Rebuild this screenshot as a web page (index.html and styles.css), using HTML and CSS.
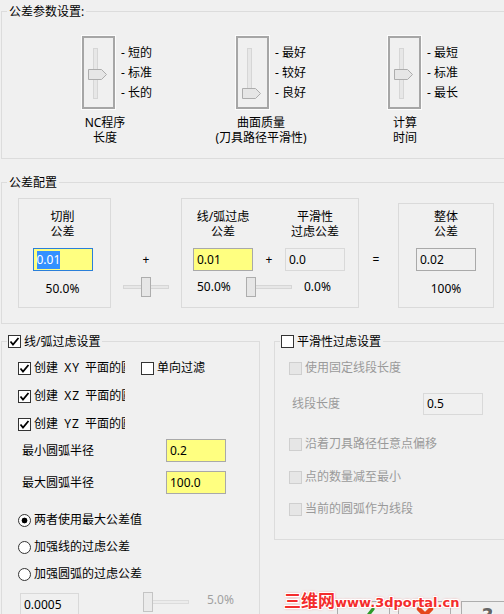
FILE: index.html
```html
<!DOCTYPE html>
<html lang="zh-CN">
<head>
	<meta charset="UTF-8">
	<title>公差设置</title>
	<link rel="stylesheet" href="styles.css">
</head>
<body>
	<!-- 公差参数: 三个竖向滑块 -->
	<fieldset class="group group-params">
		<legend>公差参数设置:</legend>
		<div class="params">
			<div class="unit">
				<div class="unit-top">
					<div class="vslider">
						<svg width="33" height="73" viewBox="0 0 33 73">
							<rect x="11.5" y="12.5" width="4" height="50" fill="#e7e7e7" stroke="#d6d6d6"/>
							<path d="M6.5 33.5h13l5 5-5 5h-13z" fill="#e6e6e6" stroke="#adadad"/>
						</svg>
					</div>
					<ul class="ticks">
						<li>- 短的</li>
						<li>- 标准</li>
						<li>- 长的</li>
					</ul>
				</div>
				<div class="cap cap-a"><span>NC程序</span><span>长度</span></div>
			</div>
			<div class="unit">
				<div class="unit-top">
					<div class="vslider">
						<svg width="33" height="73" viewBox="0 0 33 73">
							<rect x="11.5" y="12.5" width="4" height="50" fill="#e7e7e7" stroke="#d6d6d6"/>
							<path d="M6.5 52.5h13l5 5-5 5h-13z" fill="#e6e6e6" stroke="#adadad"/>
						</svg>
					</div>
					<ul class="ticks">
						<li>- 最好</li>
						<li>- 较好</li>
						<li>- 良好</li>
					</ul>
				</div>
				<div class="cap cap-b"><span>曲面质量</span><span>(刀具路径平滑性)</span></div>
			</div>
			<div class="unit">
				<div class="unit-top">
					<div class="vslider">
						<svg width="33" height="73" viewBox="0 0 33 73">
							<rect x="11.5" y="12.5" width="4" height="50" fill="#e7e7e7" stroke="#d6d6d6"/>
							<path d="M6.5 33.5h13l5 5-5 5h-13z" fill="#e6e6e6" stroke="#adadad"/>
						</svg>
					</div>
					<ul class="ticks">
						<li>- 最短</li>
						<li>- 标准</li>
						<li>- 最长</li>
					</ul>
				</div>
				<div class="cap cap-c"><span>计算</span><span>时间</span></div>
			</div>
		</div>
	</fieldset>

	<!-- 公差配置 -->
	<fieldset class="group group-conf">
		<legend>公差配置</legend>
		<div class="conf">
			<div class="tbox tbox-cut">
				<div class="ttl"><span>切削</span><span>公差</span></div>
				<div class="field field-yellow field-focus"><span class="sel">0.01</span></div>
				<div class="pct">50.0%</div>
			</div>
			<div class="op-col">
				<div class="op">+</div>
				<svg class="hslider" width="46" height="20" viewBox="0 0 46 20">
					<rect x="0.5" y="8.5" width="45" height="3" fill="#e7e7e7" stroke="#d6d6d6"/>
					<rect x="18.5" y="0.5" width="9" height="19" fill="#e6e6e6" stroke="#adadad"/>
				</svg>
			</div>
			<div class="tbox tbox-mid">
				<div class="mid-grid">
					<div class="ttl"><span>线/弧过虑</span><span>公差</span></div>
					<div></div>
					<div class="ttl"><span>平滑性</span><span>过虑公差</span></div>
					<div class="field field-yellow">0.01</div>
					<div class="op">+</div>
					<div class="field field-soft">0.0</div>
				</div>
				<div class="mid-foot">
					<span class="foot-a">50.0%</span>
					<svg class="hslider" width="46" height="20" viewBox="0 0 46 20">
						<rect x="0.5" y="8.5" width="45" height="3" fill="#e7e7e7" stroke="#d6d6d6"/>
						<rect x="0.5" y="0.5" width="9" height="19" fill="#e6e6e6" stroke="#adadad"/>
					</svg>
					<span class="foot-b">0.0%</span>
				</div>
			</div>
			<div class="eq-col">=</div>
			<div class="tbox tbox-sum">
				<div class="ttl"><span>整体</span><span>公差</span></div>
				<div class="field">0.02</div>
				<div class="pct">100%</div>
			</div>
		</div>
	</fieldset>

	<div class="lower">
		<!-- 线/弧过虑设置 -->
		<fieldset class="group group-arc">
			<legend>
				<span class="chk-line">
					<i class="cb"><svg width="11" height="11" viewBox="0 0 11 11"><path d="M1.5 5.5l2.5 3 5.5-6.5" fill="none" stroke="#000" stroke-width="1.8"/></svg></i>
					<span>线/弧过虑设置</span>
				</span>
			</legend>
			<div class="arc">
				<div class="cb-row">
					<i class="cb"><svg width="11" height="11" viewBox="0 0 11 11"><path d="M1.5 5.5l2.5 3 5.5-6.5" fill="none" stroke="#000" stroke-width="1.8"/></svg></i>
					<span class="txt clip">创建 <span class="xy">XY</span> 平面的圆弧</span>
					<i class="cb cb2"></i>
					<span class="txt">单向过滤</span>
				</div>
				<div class="cb-row">
					<i class="cb"><svg width="11" height="11" viewBox="0 0 11 11"><path d="M1.5 5.5l2.5 3 5.5-6.5" fill="none" stroke="#000" stroke-width="1.8"/></svg></i>
					<span class="txt clip">创建 <span class="xy">XZ</span> 平面的圆弧</span>
				</div>
				<div class="cb-row">
					<i class="cb"><svg width="11" height="11" viewBox="0 0 11 11"><path d="M1.5 5.5l2.5 3 5.5-6.5" fill="none" stroke="#000" stroke-width="1.8"/></svg></i>
					<span class="txt clip">创建 <span class="xy">YZ</span> 平面的圆弧</span>
				</div>
				<div class="rad-row rad-min">
					<span class="lbl">最小圆弧半径</span>
					<div class="field field-yellow">0.2</div>
				</div>
				<div class="rad-row rad-max">
					<span class="lbl">最大圆弧半径</span>
					<div class="field field-yellow">100.0</div>
				</div>
				<div class="radio-row radio-first"><i class="rb on"></i><span>两者使用最大公差值</span></div>
				<div class="radio-row"><i class="rb"></i><span>加强线的过虑公差</span></div>
				<div class="radio-row"><i class="rb"></i><span>加强圆弧的过虑公差</span></div>
				<div class="tail">
					<div class="field field-soft field-tail">0.0005</div>
					<svg class="hslider tail-slider" width="46" height="20" viewBox="0 0 46 20">
						<rect x="0.5" y="8.5" width="45" height="3" fill="#ececec" stroke="#dcdcdc"/>
						<rect x="0.5" y="0.5" width="9" height="19" fill="#ebebeb" stroke="#c4c4c4"/>
					</svg>
					<span class="tail-pct">5.0%</span>
				</div>
			</div>
		</fieldset>

		<div class="side">
			<!-- 平滑性过虑设置 -->
			<fieldset class="group group-smooth">
				<legend>
					<span class="chk-line">
						<i class="cb"></i>
						<span>平滑性过虑设置</span>
					</span>
				</legend>
				<div class="smooth">
					<div class="cb-row off">
						<i class="cb cb-off"></i>
						<span class="txt">使用固定线段长度</span>
					</div>
					<div class="len-row">
						<span class="lbl off">线段长度</span>
						<div class="field field-soft">0.5</div>
					</div>
					<div class="cb-row off row-a">
						<i class="cb cb-off"></i>
						<span class="txt">沿着刀具路径任意点偏移</span>
					</div>
					<div class="cb-row off row-b">
						<i class="cb cb-off"></i>
						<span class="txt">点的数量减至最小</span>
					</div>
					<div class="cb-row off row-c">
						<i class="cb cb-off"></i>
						<span class="txt">当前的圆弧作为线段</span>
					</div>
				</div>
			</fieldset>

			<div class="btns">
				<button class="btn">
					<svg width="22" height="22" viewBox="0 0 22 22"><path d="M4 14l5 5L20 5" fill="none" stroke="#2f9a2a" stroke-width="3.2" stroke-linecap="round" stroke-linejoin="round"/></svg>
				</button>
				<button class="btn">
					<svg width="22" height="22" viewBox="0 0 22 22"><path d="M5 5l12 12M17 5L5 17" fill="none" stroke="#e5471c" stroke-width="4.5" stroke-linecap="round"/></svg>
				</button>
				<button class="btn btn-help"><span class="help">?</span></button>
			</div>
		</div>
	</div>

	<div class="mark"><span class="mark-cn">三维网</span>www.3dportal.cn</div>
</body>
</html>
```

FILE: styles.css
```css
*{
	margin: 0;
	padding: 0;
	box-sizing: border-box;
}
body{
	width: 504px;
	height: 614px;
	overflow: hidden;
	position: relative;
	background: #f0f0f0;
	color: #000;
	font: 12px/16px "Noto Sans", "Noto Sans CJK SC", sans-serif;
}
ul{
	list-style: none;
}
i{
	font-style: normal;
}

/* 分组框 */
.group{
	border: 1px solid #dcdcdc;
	padding: 0;
	min-width: 0;
}
.group legend{
	margin-left: 5px;
	padding: 0 2px;
	height: 17px;
	line-height: 17px;
}

/* 公差参数设置 */
.group-params{
	width: 520px;
	margin: 3px 0 0 1px;
}
.params{
	display: grid;
	grid-template-columns: 154px 152px auto;
	padding: 15px 0 13px 79px;
}
.unit-top{
	display: flex;
}
.vslider{
	width: 35px;
	height: 75px;
	border: 1px solid #fcfcfc;
	box-shadow: inset 0 0 0 2px #a6a6a6;
}
.vslider svg{
	display: block;
}
.ticks{
	margin-left: 5px;
	padding-top: 8px;
	line-height: 20px;
	white-space: nowrap;
}
.cap{
	display: flex;
	flex-direction: column;
	align-items: center;
	margin-top: 5px;
	line-height: 15px;
	white-space: nowrap;
}
.cap-a{ width: 48px; }
.cap-b{ width: 52px; }
.cap-c{ width: 36px; }

/* 公差配置 */
.group-conf{
	width: 520px;
	margin: 15px 0 0 1px;
}
.conf{
	display: flex;
	align-items: flex-start;
	padding: 7px 0 15px 16px;
}
.tbox{
	flex: none;
	height: 110px;
	border: 1px solid #dadada;
	padding-top: 10px;
	display: flex;
	flex-direction: column;
	align-items: center;
}
.tbox-cut{
	width: 93px;
	padding-right: 4px;
}
.tbox-mid{
	width: 178px;
	padding-left: 11px;
	align-items: flex-start;
}
.tbox-sum{
	width: 96px;
	height: 105px;
	padding-top: 5px;
	margin: 5px 0 0 5px;
}
.ttl{
	display: flex;
	flex-direction: column;
	align-items: center;
	line-height: 15px;
	white-space: nowrap;
}
.field{
	width: 60px;
	height: 23px;
	border: 1px solid #a9a9a9;
	background: #f0f0f0;
	padding-left: 3px;
	line-height: 21px;
	white-space: nowrap;
}
.field-yellow{ background: #ffff80; }
.field-focus{ border-color: #2a7fd9; }
.field-soft{ border-color: #d9d9d9; }
.sel{
	display: inline-block;
	line-height: 18px;
	background: #3390ff;
	color: #fff;
}
.tbox > .field{
	margin-top: 9px;
}
.pct{
	margin-top: 10px;
	line-height: 15px;
}
.op-col{
	flex: none;
	width: 70px;
	padding-top: 50px;
	display: flex;
	flex-direction: column;
	align-items: center;
}
.op{
	line-height: 23px;
	text-align: center;
}
.hslider{
	display: block;
	flex: none;
}
.op-col .hslider{
	margin-top: 6px;
}
.eq-col{
	flex: none;
	width: 34px;
	padding-top: 50px;
	line-height: 23px;
	text-align: center;
}
.mid-grid{
	display: grid;
	grid-template-columns: 60px 32px 60px;
	grid-template-rows: 30px 23px;
	row-gap: 9px;
}
.mid-foot{
	display: flex;
	align-items: center;
	height: 20px;
	margin: 6px 0 0 4px;
}
.foot-a{
	width: 49px;
}
.foot-b{
	margin-left: 12px;
}

/* 下半部分 */
.lower{
	display: flex;
	align-items: flex-start;
	margin: 9px 0 0 1px;
}
.group-arc{
	flex: none;
	width: 259px;
}
.chk-line{
	display: flex;
	align-items: center;
	gap: 3px;
	margin-left: -1px;
}
.cb{
	display: block;
	flex: none;
	width: 13px;
	height: 13px;
	border: 1px solid #333;
	background: #fff;
}
.cb svg{
	display: block;
}
.cb-off{
	border-color: #cfcfcf;
	background: #e6e6e6;
}
.off{
	color: #9a9a9a;
}
.arc{
	padding: 8px 0 0 16px;
}
.cb-row{
	display: flex;
	align-items: center;
	height: 20px;
}
.cb-row + .cb-row{
	margin-top: 8px;
}
.cb-row .txt{
	margin-left: 3px;
	white-space: nowrap;
}
.clip{
	flex: none;
	width: 91px;
	overflow: hidden;
}
.xy{
	letter-spacing: 1px;
	margin: 0 2px 0 3px;
}
.cb-row .cb2{
	margin-left: 16px;
}
.rad-row{
	display: flex;
	align-items: center;
	height: 23px;
	padding-left: 4px;
}
.rad-row .lbl{
	width: 144px;
}
.rad-min{ margin-top: 5px; }
.rad-max{ margin-top: 9px; }
.radio-row{
	display: flex;
	align-items: center;
	gap: 3px;
	height: 20px;
	margin-top: 7px;
}
.radio-first{
	margin-top: 16px;
}
.rb{
	display: block;
	width: 13px;
	height: 13px;
	border: 1px solid #333;
	border-radius: 50%;
	background: #fff;
}
.rb.on{
	background: radial-gradient(circle, #000 2.6px, #fff 3.2px);
}
.tail{
	display: flex;
	align-items: flex-start;
	margin-top: 9px;
	padding-left: 2px;
}
.field-tail{
	width: 59px;
}
.tail-slider{
	margin: -1px 0 0 64px;
}
.tail-pct{
	margin-left: 18px;
	line-height: 14px;
	color: #a0a0a0;
}

/* 平滑性过虑设置 */
.side{
	flex: none;
	margin-left: 14px;
}
.group-smooth{
	width: 240px;
}
.smooth{
	padding: 8px 0 20px 14px;
}
.len-row{
	display: flex;
	align-items: center;
	height: 22px;
	margin-top: 15px;
}
.len-row .lbl{
	width: 131px;
	margin-left: 3px;
}
.len-row .field{
	height: 22px;
	line-height: 20px;
}
.smooth .row-a{ margin-top: 19px; }
.smooth .row-b{ margin-top: 13px; }
.smooth .row-c{ margin-top: 12px; }

/* 底部按钮 */
.btns{
	display: flex;
	margin-top: 61px;
	padding-left: 63px;
}
.btn{
	flex: none;
	width: 53px;
	height: 30px;
	border: 1px solid #adadad;
	background: #efefef;
	display: flex;
	justify-content: center;
	padding-top: 2px;
}
.btn + .btn{
	margin-left: 8px;
}
.btn.btn-help{
	margin-left: 10px;
}
.help{
	font: bold 20px/22px "DejaVu Sans", sans-serif;
	color: #666;
	text-shadow: 1px 1px 0 #fff;
}

/* 水印 */
.mark{
	position: absolute;
	left: 284px;
	top: 590px;
	white-space: nowrap;
	font: bold 13px/20px "DejaVu Sans", sans-serif;
	color: #f42c2c;
	text-shadow: 1px 0 0 #fff, -1px 0 0 #fff, 0 1px 0 #fff, 0 -1px 0 #fff,
		1px 1px 0 #fff, -1px -1px 0 #fff, 1px -1px 0 #fff, -1px 1px 0 #fff,
		0 0 3px #f55;
}
.mark-cn{
	font: bold 17px/20px "Noto Sans CJK SC", sans-serif;
}
```
